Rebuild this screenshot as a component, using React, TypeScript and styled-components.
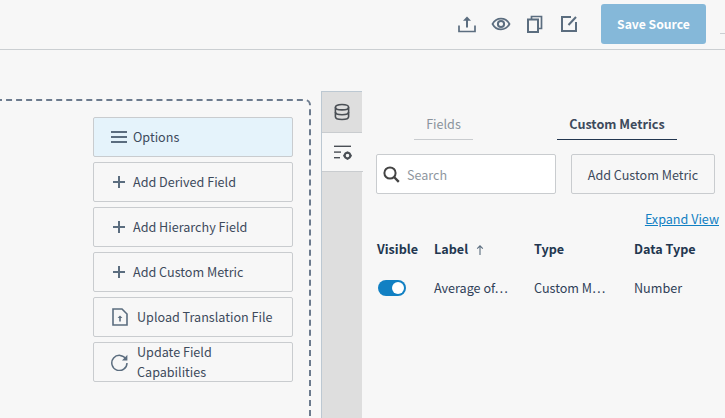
import React from "react";
import styled, { createGlobalStyle } from "styled-components";

const GlobalStyle = createGlobalStyle`
  html, body {
    margin: 0;
    height: 100%;
    overflow: hidden;
    background: #f7f7f7;
    font-family: "Noto Sans CJK SC", "Noto Sans", sans-serif;
    color: #3d4a5c;
  }
`;

const Page = styled.div`
  width: 725px;
  height: 418px;
  display: flex;
  flex-direction: column;
  overflow: hidden;
`;

const Header = styled.header`
  position: relative;
  height: 50px;
  flex: none;
  display: flex;
  align-items: flex-start;
  justify-content: flex-end;
  padding: 4px 19px 0 0;
  box-sizing: border-box;
  border-bottom: 1px solid #cbcfd2;
`;

const HeaderTick = styled.div`
  position: absolute;
  right: 0;
  top: 33px;
  width: 5px;
  height: 1px;
  background: #cbcfd2;
`;

const HeaderIcons = styled.div`
  display: flex;
  align-items: center;
  gap: 14px;
  height: 40px;
  margin-right: 22px;
`;

const IconSlot = styled.span`
  display: flex;
  width: 20px;
  height: 20px;
  color: #5b6d7f;
`;

const SaveButton = styled.button`
  width: 105px;
  height: 40px;
  border: none;
  border-radius: 3px;
  background: #85b8d9;
  color: #fff;
  font: 700 12.2px "Noto Sans CJK SC", "Noto Sans", sans-serif;
`;

const Main = styled.main`
  flex: 1;
  display: flex;
  min-height: 0;
`;

const LeftArea = styled.section`
  width: 321px;
  flex: none;
  padding-top: 49px;
  box-sizing: border-box;
  overflow: hidden;
`;

const DropZone = styled.div`
  width: 331px;
  margin-left: -20px;
  height: 400px;
  box-sizing: border-box;
  border: 2px dashed #6c7b8e;
  border-radius: 6px;
  padding: 16px 16px 0 111px;
  display: flex;
  flex-direction: column;
  gap: 5px;
`;

const ActionButton = styled.button<{ $active?: boolean }>`
  width: 200px;
  height: 40px;
  flex: none;
  box-sizing: border-box;
  display: flex;
  align-items: center;
  gap: 5px;
  padding: 0 16px;
  border: 1px solid #c9cccf;
  border-radius: 2px;
  background: ${(p) => (p.$active ? "#e5f3fb" : "#f7f7f7")};
  color: #3d4a5c;
  font: 400 12.6px/20px "Noto Sans CJK SC", "Noto Sans", sans-serif;
  text-align: left;
`;

const ActionIcon = styled.span<{ $wide?: boolean }>`
  display: flex;
  flex: none;
  width: 18px;
  height: 18px;
  color: #5b6d7f;
  margin-right: ${(p) => (p.$wide ? "4px" : "0")};
`;

const RightArea = styled.section`
  flex: 1;
  display: flex;
  padding-top: 41px;
  min-width: 0;
`;

const Rail = styled.nav`
  width: 41px;
  flex: none;
  background: #dedede;
  border-top: 1px solid #bcc8d2;
  border-left: 1px solid #bcc8d2;
  box-sizing: border-box;
`;

const RailTab = styled.div<{ $active?: boolean }>`
  height: ${(p) => (p.$active ? "39px" : "41px")};
  display: flex;
  align-items: center;
  justify-content: center;
  color: #4a4f55;
  background: ${(p) => (p.$active ? "#f7f7f7" : "#dedede")};
  border-bottom: 1px solid #c9cccf;
  margin-right: ${(p) => (p.$active ? "-1px" : "0")};
  box-sizing: border-box;
`;

const Content = styled.div`
  flex: 1;
  min-width: 0;
  padding: 0 10px 0 14px;
  display: flex;
  flex-direction: column;
`;

const TabRow = styled.div`
  display: flex;
  height: 49px;
  flex: none;
  align-items: flex-end;
  padding-left: 38px;
  gap: 84px;
`;

const Tab = styled.div<{ $active?: boolean }>`
  height: 25px;
  width: ${(p) => (p.$active ? "120px" : "59px")};
  box-sizing: border-box;
  text-align: center;
  font-size: 12.6px;
  line-height: 18px;
  font-weight: ${(p) => (p.$active ? 700 : 400)};
  color: ${(p) => (p.$active ? "#3d4a5c" : "#8a939c")};
  border-bottom: 1px solid ${(p) => (p.$active ? "#22364f" : "#c9cccf")};
`;

const SearchRow = styled.div`
  display: flex;
  gap: 15px;
  margin-top: 14px;
  flex: none;
`;

const SearchBox = styled.div`
  width: 180px;
  height: 40px;
  box-sizing: border-box;
  display: flex;
  align-items: center;
  gap: 7px;
  padding: 0 6px;
  background: #fff;
  border: 1px solid #c9cccf;
  border-radius: 2px;
  color: #444;
`;

const SearchPlaceholder = styled.span`
  font-size: 12.6px;
  color: #8f979f;
`;

const PlainButton = styled.button`
  width: 144px;
  height: 40px;
  flex: none;
  box-sizing: border-box;
  border: 1px solid #c9cccf;
  border-radius: 2px;
  background: #f7f7f7;
  color: #3d4a5c;
  padding: 0;
  font: 400 12.6px "Noto Sans CJK SC", "Noto Sans", sans-serif;
`;

const ExpandLink = styled.a`
  align-self: flex-end;
  margin: 16px -4px 0 0;
  font-size: 12.6px;
  line-height: 18px;
  color: #1180c3;
  text-decoration: underline;
`;

const ColumnRow = styled.div`
  display: grid;
  grid-template-columns: 57px 100px 100px 1fr;
  padding-left: 1px;
  white-space: nowrap;
  align-items: center;
  font-size: 12.6px;
  line-height: 18px;
`;

const HeadRow = styled(ColumnRow)`
  margin-top: 12px;
  font-weight: 700;
  color: #22364f;
`;

const BodyRow = styled(ColumnRow)`
  margin-top: 21px;
  color: #2f4058;
`;

const SortArrow = styled.span`
  display: inline-flex;
  margin-left: 8px;
  color: #5b6d7f;
  vertical-align: -1px;
`;

const Toggle = styled.span`
  position: relative;
  display: block;
  width: 28px;
  height: 16px;
  margin-left: 1px;
  border-radius: 8px;
  background: #1180c3;
`;

const ToggleKnob = styled.span`
  position: absolute;
  right: 2px;
  top: 2px;
  width: 12px;
  height: 12px;
  border-radius: 50%;
  background: #fff;
`;

const stroke = {
  fill: "none",
  stroke: "currentColor",
  strokeWidth: 1.7,
};

const UploadIcon = () => (
  <svg width="20" height="20" viewBox="0 0 20 20" {...stroke}>
    <path d="M2 11.5V17.5H18V11.5" />
    <path d="M10 13.5V4" strokeWidth="2" />
    <path d="M6 6.8L10 2.6L14 6.8Z" fill="currentColor" stroke="none" />
  </svg>
);

const EyeIcon = () => (
  <svg width="20" height="20" viewBox="0 0 20 20" {...stroke}>
    <path d="M1.5 10C3.5 6.3 6.5 4.6 10 4.6S16.5 6.3 18.5 10C16.5 13.7 13.5 15.4 10 15.4S3.5 13.7 1.5 10Z" />
    <circle cx="10" cy="10" r="3.1" strokeWidth="2" />
  </svg>
);

const CopyIcon = () => (
  <svg width="20" height="20" viewBox="0 0 20 20" {...stroke}>
    <rect x="3" y="5.5" width="10" height="12.5" strokeWidth="2" />
    <path d="M6.5 5V2.5H16.5V14.5H13.5" />
  </svg>
);

const EditIcon = () => (
  <svg width="20" height="20" viewBox="0 0 20 20" {...stroke}>
    <path d="M12 3H3V17H17V8" strokeWidth="2" />
    <path d="M9.5 11L17 3" strokeWidth="2" />
  </svg>
);

const MenuIcon = () => (
  <svg width="18" height="18" viewBox="0 0 18 18" fill="currentColor">
    <rect x="1" y="3" width="16" height="2" />
    <rect x="1" y="8" width="16" height="2" />
    <rect x="1" y="13" width="16" height="2" />
  </svg>
);

const PlusIcon = () => (
  <svg width="18" height="18" viewBox="0 0 18 18" fill="currentColor">
    <rect x="3" y="8" width="12" height="2" />
    <rect x="8" y="3" width="2" height="12" />
  </svg>
);

const FileUpIcon = () => (
  <svg width="18" height="18" viewBox="0 0 18 18" fill="none" stroke="currentColor" strokeWidth="1.6">
    <path d="M3 1H12L17 6V17H3Z" />
    <path d="M10 13.5V9" />
    <path d="M7.6 10L10 7.4L12.4 10Z" fill="currentColor" stroke="none" />
  </svg>
);

const RefreshIcon = () => (
  <svg width="18" height="18" viewBox="0 0 18 18" fill="none" stroke="currentColor" strokeWidth="1.5">
    <path d="M16 6.2A7.6 7.6 0 1 0 17 10" />
    <path d="M17.4 1.8V7.4H12Z" strokeWidth="0" fill="currentColor" />
  </svg>
);

const DatabaseIcon = () => (
  <svg width="18" height="18" viewBox="0 0 18 18" fill="none" stroke="currentColor" strokeWidth="1.6">
    <ellipse cx="9" cy="4.2" rx="6.6" ry="2.7" />
    <path d="M2.4 4.2V13.8C2.4 15.3 5.4 16.5 9 16.5S15.6 15.3 15.6 13.8V4.2" />
    <path d="M2.4 9C2.4 10.5 5.4 11.7 9 11.7S15.6 10.5 15.6 9" />
  </svg>
);

const ListGearIcon = () => (
  <svg width="18" height="18" viewBox="0 0 18 18" fill="currentColor">
    <rect x="0" y="2.6" width="17" height="1.4" />
    <rect x="0" y="8.4" width="7" height="1.4" />
    <rect x="0" y="14" width="6" height="1.4" />
    <circle cx="13.5" cy="12.6" r="2.8" fill="none" stroke="currentColor" strokeWidth="2" />
    <path d="M12.7 8.4H14.3V10.4H12.7ZM12.7 14.8H14.3V16.8H12.7ZM9.2 11.8H11.2V13.4H9.2ZM15.8 11.8H17.8V13.4H15.8Z" />
  </svg>
);

const SearchIcon = () => (
  <svg width="17" height="17" viewBox="0 0 17 17" fill="none" stroke="currentColor" strokeWidth="2">
    <circle cx="7" cy="7" r="5.6" />
    <path d="M11 11L15.8 15.8" strokeWidth="2.4" />
  </svg>
);

const ArrowUpIcon = () => (
  <svg width="8" height="10" viewBox="0 0 8 10" fill="none" stroke="currentColor" strokeWidth="1.1">
    <path d="M4 10V1M1.2 3.6L4 .8L6.8 3.6" />
  </svg>
);

export default function App() {
  return (
    <Page>
      <GlobalStyle />
      <Header>
        <HeaderIcons>
          <IconSlot><UploadIcon /></IconSlot>
          <IconSlot><EyeIcon /></IconSlot>
          <IconSlot><CopyIcon /></IconSlot>
          <IconSlot><EditIcon /></IconSlot>
        </HeaderIcons>
        <SaveButton>Save Source</SaveButton>
        <HeaderTick />
      </Header>
      <Main>
        <LeftArea>
          <DropZone>
            <ActionButton $active>
              <ActionIcon><MenuIcon /></ActionIcon>
              Options
            </ActionButton>
            <ActionButton>
              <ActionIcon><PlusIcon /></ActionIcon>
              Add Derived Field
            </ActionButton>
            <ActionButton>
              <ActionIcon><PlusIcon /></ActionIcon>
              Add Hierarchy Field
            </ActionButton>
            <ActionButton>
              <ActionIcon><PlusIcon /></ActionIcon>
              Add Custom Metric
            </ActionButton>
            <ActionButton>
              <ActionIcon $wide><FileUpIcon /></ActionIcon>
              Upload Translation File
            </ActionButton>
            <ActionButton>
              <ActionIcon $wide><RefreshIcon /></ActionIcon>
              Update Field Capabilities
            </ActionButton>
          </DropZone>
        </LeftArea>
        <RightArea>
          <Rail>
            <RailTab><DatabaseIcon /></RailTab>
            <RailTab $active><ListGearIcon /></RailTab>
          </Rail>
          <Content>
            <TabRow>
              <Tab>Fields</Tab>
              <Tab $active>Custom Metrics</Tab>
            </TabRow>
            <SearchRow>
              <SearchBox>
                <SearchIcon />
                <SearchPlaceholder>Search</SearchPlaceholder>
              </SearchBox>
              <PlainButton>Add Custom Metric</PlainButton>
            </SearchRow>
            <ExpandLink>Expand View</ExpandLink>
            <HeadRow>
              <span>Visible</span>
              <span>Label<SortArrow><ArrowUpIcon /></SortArrow></span>
              <span>Type</span>
              <span>Data Type</span>
            </HeadRow>
            <BodyRow>
              <Toggle><ToggleKnob /></Toggle>
              <span>Average of…</span>
              <span>Custom M…</span>
              <span>Number</span>
            </BodyRow>
          </Content>
        </RightArea>
      </Main>
    </Page>
  );
}
